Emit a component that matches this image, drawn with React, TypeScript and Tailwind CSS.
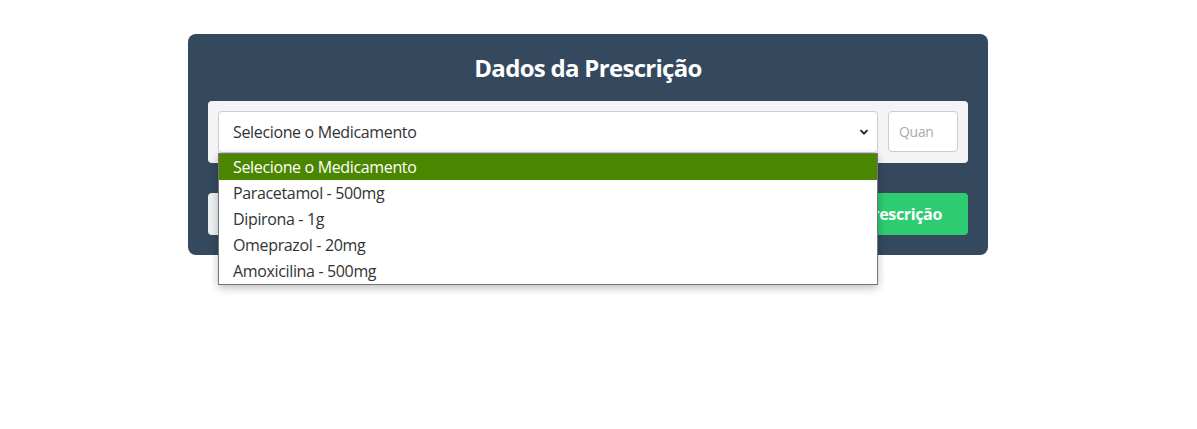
import React from 'react'

const options = [
  'Selecione o Medicamento',
  'Paracetamol - 500mg',
  'Dipirona - 1g',
  'Omeprazol - 20mg',
  'Amoxicilina - 500mg',
]

export default function App() {
  return (
    <div className="min-h-[429px] bg-white pt-[34px] font-['Open_Sans',sans-serif] text-[#333]">
      <div className="w-[1176px]">
        <div className="mx-auto w-[800px] rounded-lg bg-[#34495e] px-5 pb-5 pt-[18px]">
          <h2 className="text-center text-[24px] font-bold leading-8 tracking-[-0.7px] text-white">
            Dados da Prescrição
          </h2>

          <div className="mt-[17px] flex gap-[10px] rounded bg-[#f4f4f6] p-[10px]">
            <div className="relative flex-1">
              <div className="flex h-[42px] items-center justify-between rounded border border-[#ccc] bg-white pl-[14px] pr-[8px] text-[16px] tracking-[-0.35px]">
                <span>Selecione o Medicamento</span>
                <svg width="10" height="10" viewBox="0 0 10 10" className="text-[#222]">
                  <path d="M1.5 3.2 5 6.7 8.5 3.2" fill="none" stroke="currentColor" strokeWidth="1.8" />
                </svg>
              </div>

              {/* open native dropdown */}
              <ul className="absolute left-0 right-0 top-full z-10 border border-[#767676] bg-white text-[16px] tracking-[-0.35px] shadow-[0_3px_8px_rgba(0,0,0,0.25)]">
                {options.map((o, i) => (
                  <li
                    key={o}
                    className={
                      i === 0
                        ? 'flex h-[26px] items-center bg-[#4b8600] px-[14px] text-white'
                        : 'flex h-[26px] items-center px-[14px]'
                    }
                  >
                    {o}
                  </li>
                ))}
              </ul>
            </div>
            <input
              placeholder="Quan"
              className="h-[41px] w-[70px] rounded border border-[#ccc] bg-white px-[10px] text-[14px] tracking-[-0.3px] placeholder:text-[#aaa]"
            />
          </div>

          <div className="mt-[30px] flex justify-between">
            <button className="h-[42px] rounded bg-[#ecf0f1] px-6 font-bold text-[#34495e]">Limpar</button>
            <button className="h-[42px] rounded bg-[#2ecc71] px-[26px] text-[16px] font-bold tracking-[-0.35px] text-white">
              Adicionar Prescrição
            </button>
          </div>
        </div>
      </div>
    </div>
  )
}
